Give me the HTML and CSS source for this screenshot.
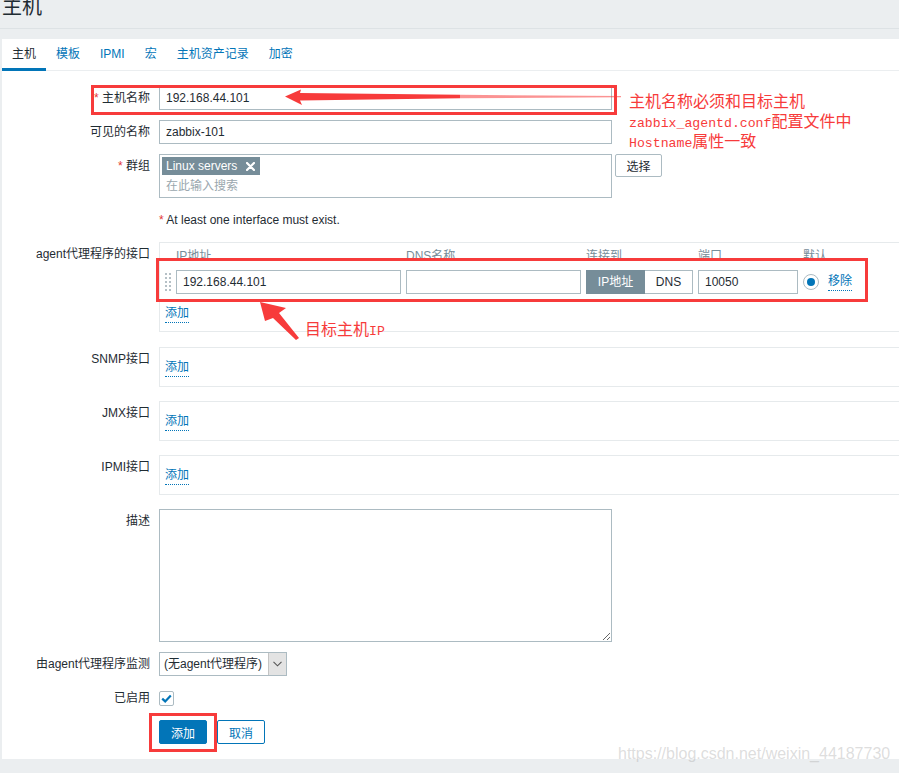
FILE: index.html
```html
<!DOCTYPE html>
<html lang="zh-CN">
<head>
<meta charset="utf-8">
<title>主机</title>
<link rel="stylesheet" href="styles.css">
</head>
<body>
<header class="page-head"><h1>主机</h1></header>
<main class="panel">
  <nav class="tabs">
    <a class="tab active">主机</a>
    <a class="tab">模板</a>
    <a class="tab">IPMI</a>
    <a class="tab">宏</a>
    <a class="tab">主机资产记录</a>
    <a class="tab">加密</a>
  </nav>
  <form class="form">
    <div class="row">
      <label class="lbl"><span class="req">*</span> 主机名称</label>
      <div class="field"><input class="txt w-lg" value="192.168.44.101"></div>
    </div>
    <div class="row">
      <label class="lbl">可见的名称</label>
      <div class="field"><input class="txt w-lg" value="zabbix-101"></div>
    </div>
    <div class="row">
      <label class="lbl"><span class="req">*</span> 群组</label>
      <div class="field field-gap">
        <div class="ms">
          <span class="tag">Linux servers <svg class="tag-x" width="9" height="9" viewBox="0 0 9 9"><path d="M1 1L8 8M8 1L1 8" stroke="#fff" stroke-width="2.2" stroke-linecap="round"/></svg></span>
          <div class="ms-ph">在此输入搜索</div>
        </div>
        <button type="button" class="btn-alt">选择</button>
      </div>
    </div>
    <div class="row">
      <span class="lbl"></span>
      <div class="field note"><span class="req">*</span> At least one interface must exist.</div>
    </div>
    <div class="row row-if1">
      <label class="lbl">agent代理程序的接口</label>
      <div class="field">
        <div class="iface iface-main">
          <div class="if-grid">
            <span></span>
            <span class="th">IP地址</span>
            <span class="th">DNS名称</span>
            <span class="th">连接到</span>
            <span class="th">端口</span>
            <span class="th">默认</span>
            <span></span>
            <span class="drag"><svg width="6" height="18" viewBox="0 0 6 18"><g fill="#b5c0c6"><rect x="0" y="0" width="2" height="2"/><rect x="4" y="0" width="2" height="2"/><rect x="0" y="4" width="2" height="2"/><rect x="4" y="4" width="2" height="2"/><rect x="0" y="8" width="2" height="2"/><rect x="4" y="8" width="2" height="2"/><rect x="0" y="12" width="2" height="2"/><rect x="4" y="12" width="2" height="2"/><rect x="0" y="16" width="2" height="2"/><rect x="4" y="16" width="2" height="2"/></g></svg></span>
            <input class="txt" value="192.168.44.101">
            <input class="txt" value="">
            <div class="seg"><span class="seg-on">IP地址</span><span class="seg-off">DNS</span></div>
            <input class="txt" value="10050">
            <span class="radio"><span class="radio-dot"></span></span>
            <span class="rm"><a class="lnk">移除</a></span>
          </div>
          <div class="addrow"><a class="lnk">添加</a></div>
        </div>
      </div>
    </div>
    <div class="row row-if">
      <label class="lbl">SNMP接口</label>
      <div class="field"><div class="iface iface-empty"><a class="lnk">添加</a></div></div>
    </div>
    <div class="row row-if">
      <label class="lbl">JMX接口</label>
      <div class="field"><div class="iface iface-empty"><a class="lnk">添加</a></div></div>
    </div>
    <div class="row row-if">
      <label class="lbl">IPMI接口</label>
      <div class="field"><div class="iface iface-empty"><a class="lnk">添加</a></div></div>
    </div>
    <div class="row">
      <label class="lbl">描述</label>
      <div class="field"><textarea class="ta"></textarea></div>
    </div>
    <div class="row">
      <label class="lbl">由agent代理程序监测</label>
      <div class="field">
        <div class="select"><span class="sel-val">(无agent代理程序)</span><span class="sel-arr"><svg width="9" height="6" viewBox="0 0 9 6"><path d="M0.5 0.8L4.5 4.8L8.5 0.8" fill="none" stroke="#555" stroke-width="1.1"/></svg></span></div>
      </div>
    </div>
    <div class="row">
      <label class="lbl">已启用</label>
      <div class="field field-mid">
        <span class="chk"><svg width="11" height="9" viewBox="0 0 11 9"><path d="M1.2 4.6L4.2 7.4L9.8 1.4" fill="none" stroke="#0275b8" stroke-width="2.2"/></svg></span>
      </div>
    </div>
    <div class="row">
      <span class="lbl"></span>
      <div class="field btns">
        <button type="button" class="btn-main">添加</button>
        <button type="button" class="btn-sec">取消</button>
      </div>
    </div>
  </form>
</main>

<svg class="marks" width="899" height="773" viewBox="0 0 899 773">
  <g fill="none" stroke="#f73b3b" stroke-width="3">
    <rect x="92.5" y="86.5" width="523" height="27"/>
    <rect x="157.5" y="259.5" width="709" height="41"/>
    <rect x="150.5" y="714.5" width="65" height="36"/>
  </g>
  <polygon fill="#f73b3b" points="285,96.5 301,89.5 300,93 460,94.8 460,98.2 300,100.5 302,105"/>
  <polygon fill="#f73b3b" fill-opacity="0.55" points="460,94.8 621,96 621,97.2 460,98.2"/>
  <polygon fill="#f73b3b" points="260,302 286,308 279,313 299,338 296,340 273,318 265,321"/>
</svg>
<div class="anno anno-host">
  <div class="anno-line">主机名称必须和目标主机</div>
  <div class="anno-line"><span class="mono">zabbix_agentd.conf</span>配置文件中</div>
  <div class="anno-line"><span class="mono">Hostname</span>属性一致</div>
</div>
<div class="anno anno-ip"><div class="anno-line">目标主机<span class="mono">IP</span></div></div>
<div class="watermark">https://blog.csdn.net/weixin_44187730</div>
</body>
</html>
```

FILE: styles.css
```css
html, body {
  margin: 0;
  padding: 0;
}
body {
  position: relative;
  height: 773px;
  overflow: hidden;
  background: #ebeef0;
  color: #1f2c33;
  font-family: "Liberation Sans", "Noto Sans CJK SC", sans-serif;
  font-size: 12px;
}
.page-head {
  display: flow-root;
  height: 28px;
  border-bottom: 1px solid #dde2e5;
  padding-left: 2px;
}
.page-head h1 {
  margin: -5px 0 0;
  font-size: 20px;
  font-weight: normal;
  line-height: 24px;
  color: #1f2c33;
}
.panel {
  margin: 10px -10px 0 2px;
  background: #fff;
  padding-bottom: 15px;
}
.tabs {
  display: flex;
  border-bottom: 1px solid #ebeef0;
}
.tab {
  padding: 7px 10px 6px;
  line-height: 16px;
  border-bottom: 3px solid transparent;
  margin-bottom: -1px;
  color: #0275b8;
}
.tab.active {
  color: #1f2c33;
  border-bottom-color: #0275b8;
}
.form {
  display: flex;
  flex-direction: column;
  gap: 10px;
  padding-top: 15px;
}
.row {
  display: flex;
  gap: 9px;
}
.row-if1 { margin-bottom: 5px; }
.row-if { margin-bottom: 4px; }
.lbl {
  flex: none;
  width: 148px;
  text-align: right;
  line-height: 24px;
}
.req { color: #e33734; }
.field {
  flex: 1;
  display: flex;
  align-items: flex-start;
}
.field-gap { gap: 3px; }
.field-mid { height: 24px; align-items: center; }
.note { line-height: 24px; display: block; }
.txt {
  box-sizing: border-box;
  height: 24px;
  border: 1px solid #acbbc2;
  padding: 0 6px;
  font: inherit;
  color: #1f2c33;
  background: #fff;
  outline: none;
  min-width: 0;
}
.w-lg { width: 453px; }
.ms {
  box-sizing: border-box;
  width: 453px;
  height: 44px;
  border: 1px solid #acbbc2;
  padding: 2px;
}
.tag {
  display: inline-flex;
  align-items: center;
  gap: 9px;
  height: 18px;
  padding: 0 5px 0 4px;
  background: #768d99;
  color: #fff;
  line-height: 18px;
}
.ms-ph {
  margin-top: 2px;
  line-height: 18px;
  padding-left: 4px;
  color: #9aa7ae;
}
.btn-alt {
  box-sizing: border-box;
  width: 47px;
  height: 23px;
  border: 1px solid #acbbc2;
  border-radius: 2px;
  background: #fff;
  color: #1f2c33;
  font: inherit;
  padding: 0;
}
.iface {
  flex: 1;
  border: 1px solid #e6eaec;
}
.iface-main {
  padding: 4px 0 8px 5px;
}
.iface-empty {
  padding: 11px 0 9px 5px;
  height: 18px;
}
.if-grid {
  display: grid;
  grid-template-columns: 6px 225px 175px 107px 100px 16px auto;
  grid-template-rows: 18px 24px;
  column-gap: 5px;
  row-gap: 5px;
  align-items: center;
}
.th {
  color: #768d99;
  line-height: 18px;
  white-space: nowrap;
}
.drag { display: flex; }
.seg {
  display: flex;
  height: 24px;
}
.seg span {
  box-sizing: border-box;
  height: 24px;
  line-height: 22px;
  text-align: center;
  border: 1px solid #acbbc2;
}
.seg-on {
  width: 59px;
  background: #768d99;
  border-color: #768d99 !important;
  color: #fff;
}
.seg-off {
  width: 48px;
  border-left: none !important;
  color: #1f2c33;
}
.radio {
  box-sizing: border-box;
  width: 16px;
  height: 16px;
  border: 1px solid #acbbc2;
  border-radius: 50%;
  display: flex;
  align-items: center;
  justify-content: center;
}
.radio-dot {
  width: 8px;
  height: 8px;
  border-radius: 50%;
  background: #0275b8;
}
.rm { margin-left: 4px; }
.lnk {
  display: inline-block;
  color: #0275b8;
  line-height: 17px;
  border-bottom: 1px dotted #0275b8;
}
.addrow {
  margin-top: 11px;
  height: 18px;
}
.ta {
  box-sizing: border-box;
  width: 453px;
  height: 133px;
  border: 1px solid #acbbc2;
  margin: 0;
  font: inherit;
}
.select {
  box-sizing: border-box;
  display: flex;
  width: 128px;
  height: 24px;
  border: 1px solid #acbbc2;
}
.sel-val {
  flex: 1;
  padding-left: 4px;
  line-height: 22px;
  white-space: nowrap;
}
.sel-arr {
  width: 17px;
  background: #e3e3e3;
  border-left: 1px solid #c4c4c4;
  display: flex;
  align-items: center;
  justify-content: center;
}
.chk {
  box-sizing: border-box;
  width: 15px;
  height: 15px;
  border: 1px solid #acbbc2;
  border-radius: 2px;
  display: flex;
  align-items: center;
  justify-content: center;
}
.btns { gap: 10px; }
.btn-main, .btn-sec {
  box-sizing: border-box;
  width: 48px;
  height: 24px;
  border: 1px solid #0275b8;
  border-radius: 2px;
  font: inherit;
  padding: 0;
}
.btn-main { background: #0275b8; color: #fff; }
.btn-sec { background: #fff; color: #0275b8; }

.marks {
  position: absolute;
  left: 0;
  top: 0;
  pointer-events: none;
}
.anno {
  position: absolute;
  color: #f73b3b;
  font-family: "Noto Sans CJK SC", sans-serif;
  font-size: 16px;
  white-space: nowrap;
}
.anno-line {
  height: 20px;
  line-height: 20px;
}
.mono {
  font-family: "Liberation Mono", monospace;
  font-size: 13.2px;
  line-height: 0;
}
.anno-host { left: 629px; top: 90px; }
.anno-ip { left: 305px; top: 318px; }
.watermark {
  position: absolute;
  left: 618px;
  top: 744px;
  font-family: "Liberation Sans", sans-serif;
  font-size: 16px;
  line-height: 20px;
  color: rgba(180, 180, 180, 0.45);
  white-space: nowrap;
}
```
